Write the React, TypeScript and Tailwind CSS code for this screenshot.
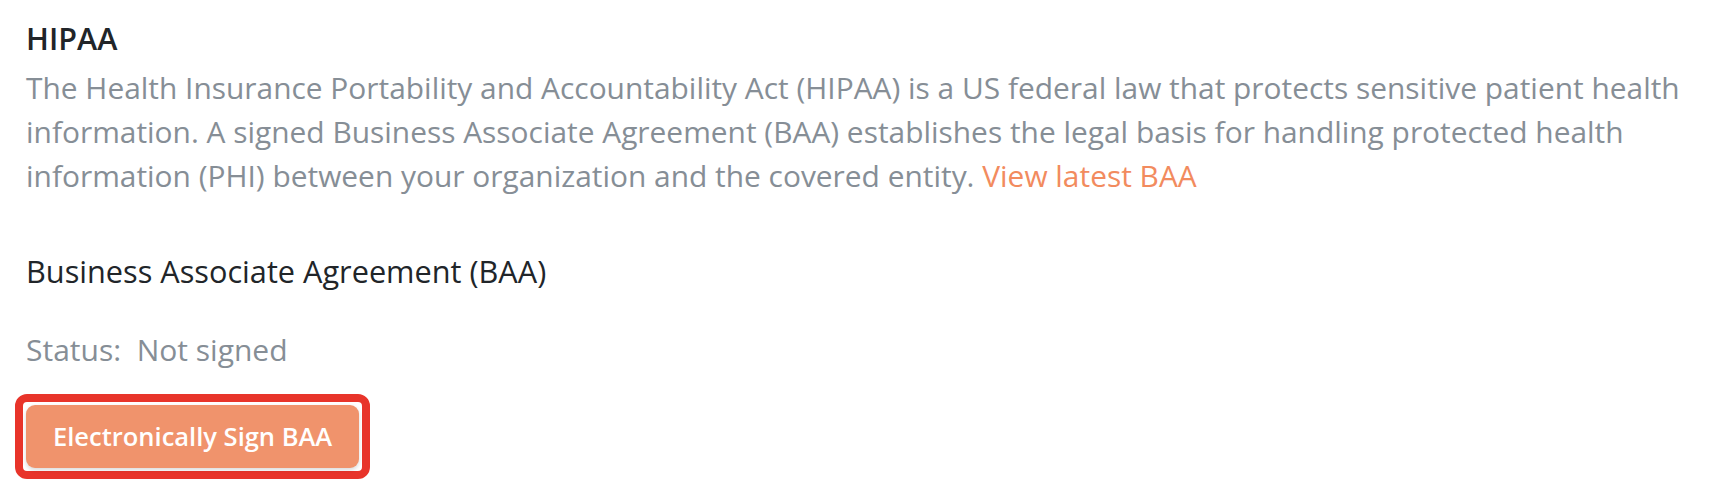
export default function App() {
  return (
    <div
      className="min-h-screen bg-white pl-[26px] pt-[20px]"
      style={{ fontFamily: '"Open Sans", "Noto Sans", sans-serif' }}
    >
      <h2 className="text-[30.5px] leading-[36px] font-semibold text-[#212529]">HIPAA</h2>
      <p className="mt-[10px] text-[29.9px] leading-[44px] text-[#868e96]">
        The Health Insurance Portability and Accountability Act (HIPAA) is a US federal law that protects
        sensitive patient health information. A signed Business Associate Agreement (BAA) establishes the
        legal basis for handling protected health information (PHI) between your organization and the
        covered entity.{" "}
        <a href="#" className="text-[#f28b5e]">
          View latest BAA
        </a>
      </p>

      <h3 className="mt-[55px] text-[30.7px] leading-[36px] text-[#212529]">
        Business Associate Agreement (BAA)
      </h3>

      <div className="mt-[43px] text-[30px] leading-[36px] text-[#868e96]">
        Status:&nbsp; Not signed
      </div>

      <div className="mt-[26px] -ml-[11px] inline-block rounded-[12px] border-[8px] border-[#e8342a] p-[3px]">
        <button className="flex h-[63px] items-center rounded-[9px] bg-[#f0936c] px-[27px] text-[25.5px] font-semibold text-white shadow-[0_2px_4px_rgba(0,0,0,0.15)]">
          Electronically Sign BAA
        </button>
      </div>
    </div>
  );
}
